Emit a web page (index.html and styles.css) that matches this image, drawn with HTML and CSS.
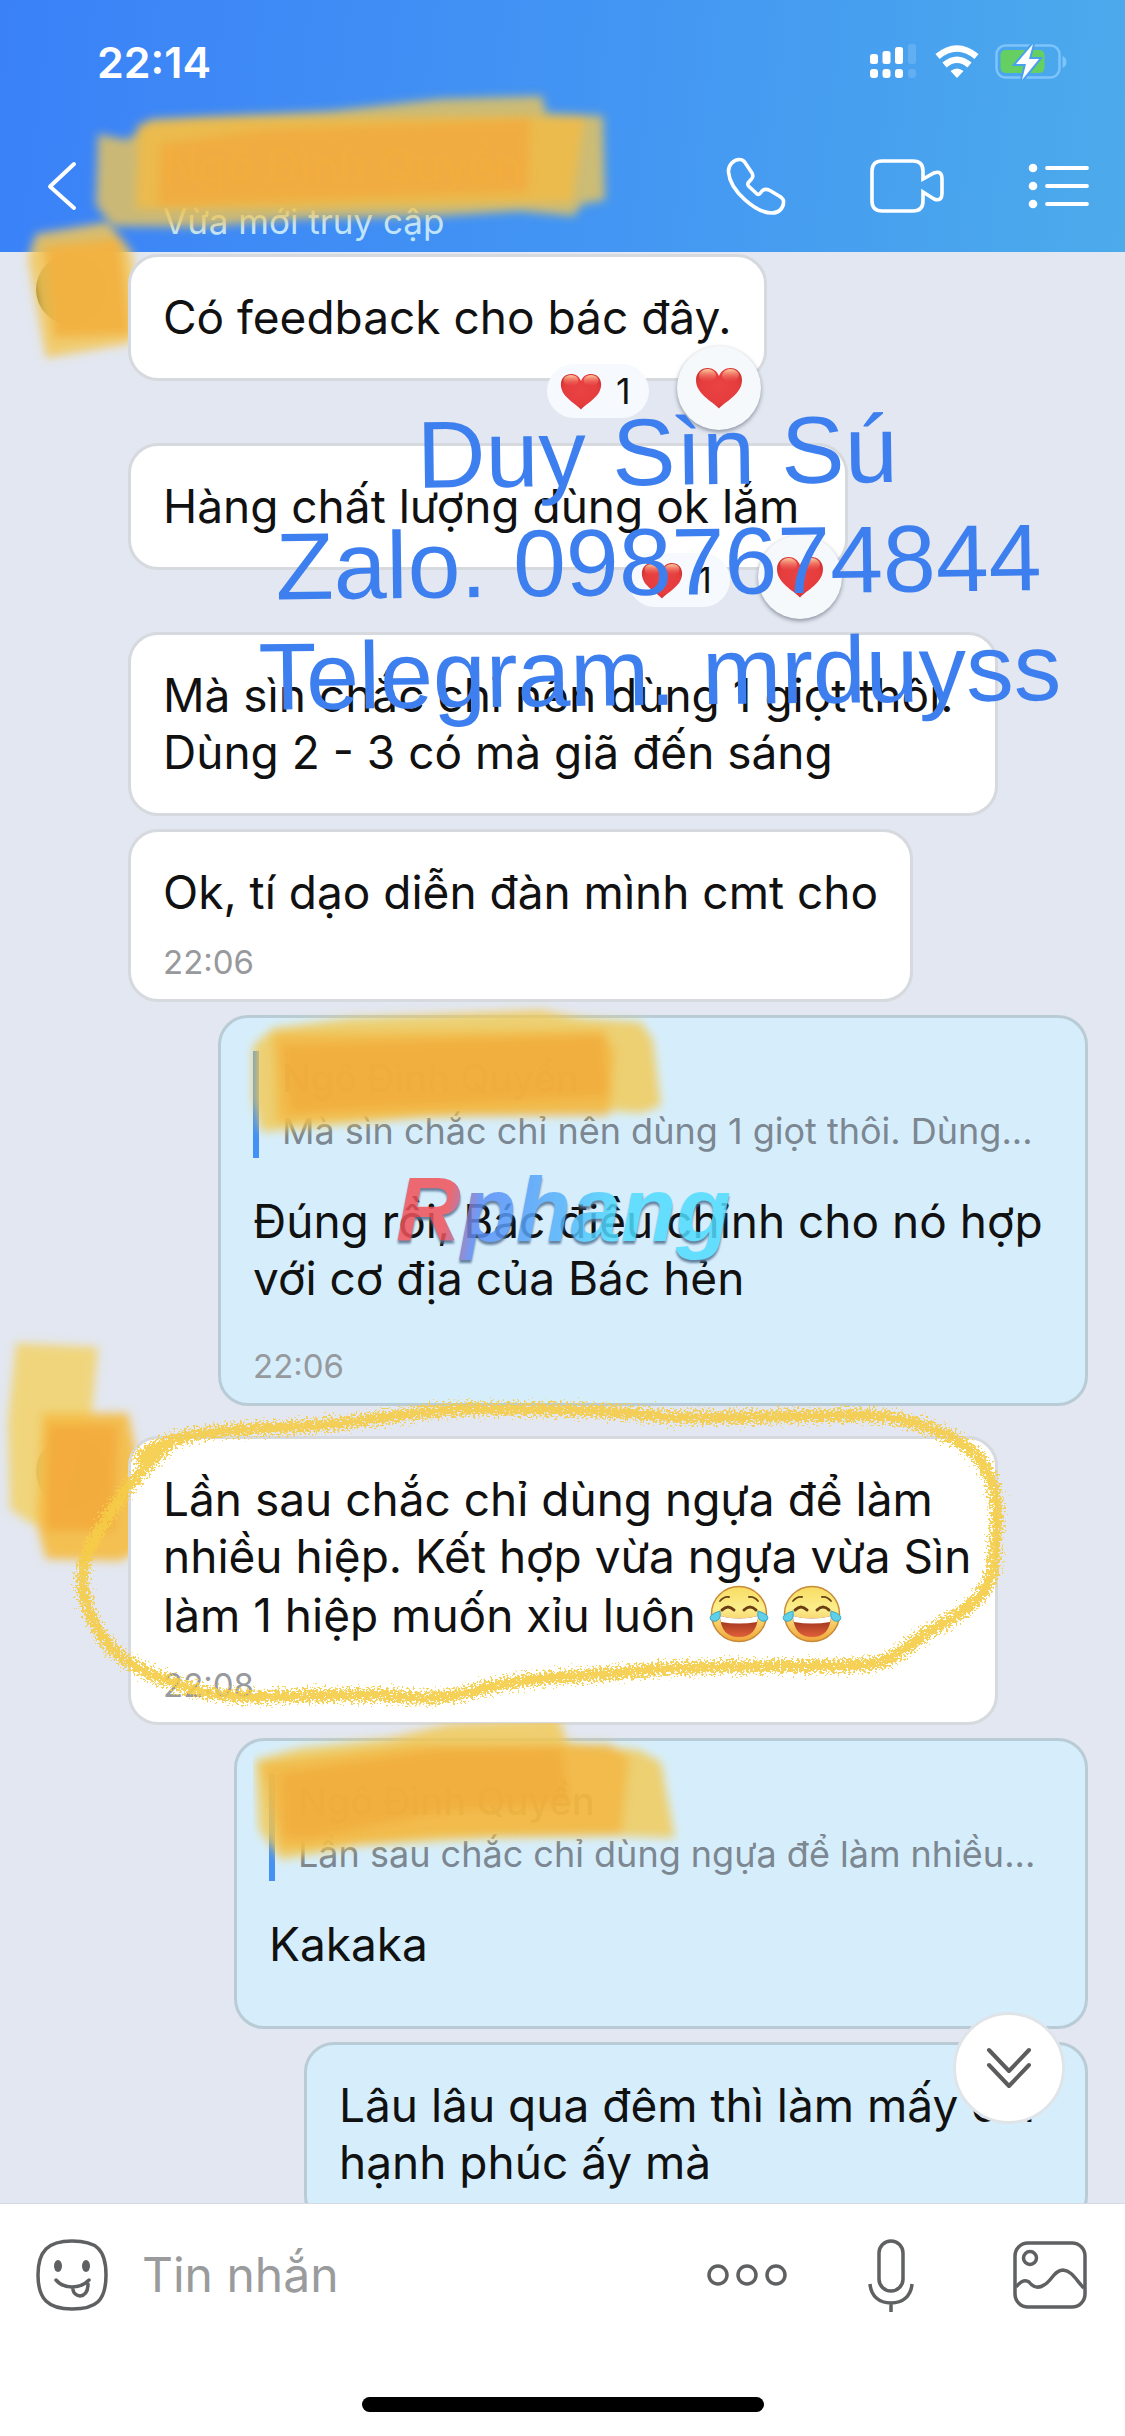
FILE: index.html
```html
<!DOCTYPE html>
<html lang="vi">
<head>
<meta charset="utf-8">
<meta name="viewport" content="width=device-width, initial-scale=1">
<title>Tin nhắn</title>
<link rel="stylesheet" href="styles.css">
</head>
<body>
<svg class="defs" width="0" height="0" aria-hidden="true">
  <defs>
    <filter id="soft" x="-10%" y="-20%" width="120%" height="140%"><feGaussianBlur stdDeviation="5"/></filter>
    <filter id="crayon" filterUnits="userSpaceOnUse" x="0" y="1380" width="1125" height="350">
      <feTurbulence type="fractalNoise" baseFrequency="0.45" numOctaves="2" seed="4" result="n"/>
      <feDisplacementMap in="SourceGraphic" in2="n" scale="22" xChannelSelector="R" yChannelSelector="G"/>
    </filter>
    <radialGradient id="heartFill" cx="0.5" cy="0.45" r="0.6"><stop offset="0" stop-color="#ea4343"/><stop offset="0.7" stop-color="#e53c3d"/><stop offset="1" stop-color="#c92f2f"/></radialGradient>
    <linearGradient id="shine" x1="0" y1="0" x2="0" y2="1"><stop offset="0" stop-color="#ffd9a8" stop-opacity=".95"/><stop offset="1" stop-color="#f0605a" stop-opacity="0"/></linearGradient>
    <linearGradient id="face" x1="0" y1="0" x2="0" y2="1"><stop offset="0" stop-color="#f8dc62"/><stop offset=".4" stop-color="#fbee8c"/><stop offset="1" stop-color="#f1a53a"/></linearGradient>
    <linearGradient id="mouth" x1="0" y1="0" x2="0" y2="1"><stop offset="0" stop-color="#8f2a16"/><stop offset="1" stop-color="#e0603a"/></linearGradient>
    <symbol id="heart" viewBox="0 0 48 42">
      <path d="M24 41.500C17 34 1 27 1 13C1 5.500 6.500 1 12.500 1C18 1 22 4 24 9C26 4 30 1 35.500 1C41.500 1 47 5.500 47 13C47 27 31 34 24 41.500Z" fill="url(#heartFill)"/>
      <ellipse cx="12.500" cy="8.500" rx="8.500" ry="6.500" fill="url(#shine)"/><ellipse cx="35.500" cy="8.500" rx="8.500" ry="6.500" fill="url(#shine)"/>
    </symbol>
    <symbol id="joy" viewBox="0 0 60 58">
      <circle cx="30" cy="29" r="27.500" fill="url(#face)" stroke="#c98a35" stroke-width="1.500"/>
      <path d="M11 16q4-5 9-4M40 12q5-1 9 4" fill="none" stroke="#6b4415" stroke-width="1.800" stroke-linecap="round"/>
      <path d="M13 25q6-6 12 0M35 25q6-6 12 0" fill="none" stroke="#6b3d12" stroke-width="3" stroke-linecap="round"/>
      <path d="M11 31q19 5 38 0q-1 21-19 21t-19-21Z" fill="url(#mouth)"/>
      <path d="M11 31q19 5 38 0q0 3-1 6q-18 3-36 0q-1-3-1-6Z" fill="#fff"/>
      <path d="M11 26q1 6-1 8q-4 4-8 1q-4-5 9-9ZM49 26q-1 6 1 8q4 4 8 1q4-5-9-9Z" fill="#5fd0e8" stroke="#3aa9c8" stroke-width="1"/>
    </symbol>
  </defs>
</svg>

<header class="top">
  <div class="status">
    <time class="clock">22:14</time>
    <svg class="signal" width="48" height="36" viewBox="0 0 48 36" fill="#fff"><rect x="1" y="10" width="8" height="10" rx="2.500"/><rect x="13.500" y="7" width="8" height="13" rx="2.500"/><rect x="26" y="3" width="8" height="17" rx="2.500"/><rect x="1" y="25" width="8" height="9" rx="3"/><rect x="13.500" y="25" width="8" height="9" rx="3"/><rect x="26" y="25" width="8" height="9" rx="3"/><g opacity=".14"><rect x="39" y="0" width="8" height="20" rx="2.500"/><rect x="39" y="25" width="8" height="9" rx="3"/></g></svg>
    <svg class="wifi" width="44" height="34" viewBox="0 0 44 34"><g fill="none" stroke="#fff" stroke-width="6.500"><path d="M2.500 11.500Q22-4.500 41.500 11.500"/><path d="M9.500 20Q22 9.500 34.500 20"/></g><path d="M15.500 26Q22 21 28.500 26L22 33Z" fill="#fff"/></svg>
    <svg class="battery" width="72" height="36" viewBox="0 0 72 36"><rect x="1.500" y="1.500" width="63" height="32" rx="9" fill="none" stroke="#7cc4fb" stroke-width="2.500"/><rect x="5.500" y="6" width="44" height="23" rx="5" fill="#66cf62"/><path d="M67.500 12q4 1.500 4 6t-4 6Z" fill="#7cc4fb"/><path d="M38 0L21 20H31L27 36L44 15H34Z" fill="#fff" stroke="#48a0ef" stroke-width="4" paint-order="stroke"/></svg>
  </div>
  <nav class="nav">
    <button class="icon back" aria-label="Quay lại"><svg width="32" height="50" viewBox="0 0 32 50"><path d="M28 3L4 25.500L28 47" fill="none" stroke="#fff" stroke-width="4" stroke-linecap="round" stroke-linejoin="round"/></svg></button>
    <div class="who">
      <h1>Ngô Đình Quyền</h1>
      <p>Vừa mới truy cập</p>
      <svg class="smear smear-title" width="560" height="170" viewBox="80 80 560 170" aria-hidden="true"><g filter="url(#soft)">
        <path d="M98 134L128 140L150 119L330 111L440 99L542 96L546 113L603 116L605 200L582 204L574 216L520 211L440 216L300 219L200 227L112 226L96 205Z" fill="#f2c653" opacity=".78"/>
        <path d="M138 124L200 118L585 117L572 202L300 208L136 209Z" fill="#f2bb44" opacity=".8"/></g>
        <path d="M160 144L262 130L530 119L528 192L270 201L158 205Z" fill="#f2a93c" opacity=".8" filter="url(#soft)"/></svg>
    </div>
    <button class="icon call" aria-label="Gọi thoại"><svg width="60" height="58" viewBox="0 0 60 58"><path d="M14 2.500C8 2 2 8 2.500 15C4 34 30 56 46 56C53 56 58 51 57.500 44C57.500 42 56 41 54 39.500L44 33.500C41 32 38 32 36 34L34 36.500C33 37.500 32 37.500 31 37L22.500 29C21.500 27.500 21.500 27 22 26L25.500 22C27.500 20 27 18 26 16L19 5.500C17.500 3.500 16 2.500 14 2.500Z" fill="none" stroke="#fff" stroke-width="3.600" stroke-linejoin="round"/></svg></button>
    <button class="icon video" aria-label="Gọi video"><svg width="74" height="54" viewBox="0 0 74 54"><path d="M12 2H43Q53 2 53 12V20L64 14Q72 11 72 20V34Q72 43 64 40L53 33V42Q53 52 43 52H12Q2 52 2 42V12Q2 2 12 2Z" fill="none" stroke="#fff" stroke-width="3.600"/></svg></button>
    <button class="icon menu" aria-label="Tùy chọn"><svg width="62" height="46" viewBox="0 0 62 46"><g fill="#fff"><circle cx="5" cy="5" r="4.300"/><circle cx="5" cy="23" r="4.300"/><circle cx="5" cy="41" r="4.300"/></g><path d="M19 5H59M19 23H59M19 41H59" stroke="#fff" stroke-width="3.800" stroke-linecap="round"/></svg></button>
  </nav>
</header>

<main class="chat">
  <article class="row reacted">
    <span class="avatar"></span>
    <svg class="smear smear-avatar-a" width="160" height="180" viewBox="10 200 160 180" aria-hidden="true"><g filter="url(#soft)"><path d="M36 234L108 222L132 252L142 328L128 344L46 358L28 258Z" fill="#f3c757" opacity=".85"/><path d="M44 246L120 238L130 334L54 338Z" fill="#f2b341" opacity=".97"/></g></svg>
    <div class="bubble"><p>Có feedback cho bác đây.</p>
      <div class="reacts"><span class="count"><svg width="42" height="37"><use href="#heart"/></svg>1</span><button class="react" aria-label="Thả tim"><svg width="48" height="42"><use href="#heart"/></svg></button></div></div>
  </article>
  <article class="row reacted">
    <div class="bubble medium"><p>Hàng chất lượng dùng ok lắm</p>
      <div class="reacts"><span class="count"><svg width="42" height="37"><use href="#heart"/></svg>1</span><button class="react" aria-label="Thả tim"><svg width="48" height="42"><use href="#heart"/></svg></button></div></div>
  </article>
  <article class="row"><div class="bubble full"><p>Mà sìn chắc chỉ nên dùng 1 giọt thôi.<br>Dùng 2 - 3 có mà giã đến sáng</p></div></article>
  <article class="row"><div class="bubble timed"><p>Ok, tí dạo diễn đàn mình cmt cho</p><time>22:06</time></div></article>
  <article class="row mine last-of-group">
    <div class="bubble timed full">
      <blockquote><strong>Ngô Đình Quyền</strong><span>Mà sìn chắc chỉ nên dùng 1 giọt thôi. Dùng...</span>
        <svg class="smear smear-quote" width="460" height="150" viewBox="236 1000 460 150" aria-hidden="true"><g filter="url(#soft)"><path d="M252 1046L272 1028L350 1018L540 1010L580 1018L640 1022L652 1040L660 1106L640 1113L600 1110L420 1118L260 1132L252 1100Z" fill="#f2c850" opacity=".8"/><path d="M272 1034L602 1030L614 1052L608 1116L420 1116L276 1122Z" fill="#f2b642" opacity=".8"/><path d="M280 1046L602 1036L608 1096L290 1112Z" fill="#f2a93c" opacity=".65"/></g></svg>
      </blockquote>
      <p>Đúng rồi, Bác điều chỉnh cho nó hợp<br>với cơ địa của Bác hẻn</p><time>22:06</time>
    </div>
  </article>
  <article class="row">
    <span class="avatar"></span>
    <svg class="smear smear-avatar-b" width="170" height="280" viewBox="-10 1320 170 280" aria-hidden="true"><g filter="url(#soft)"><path d="M16 1342L98 1346L92 1410L60 1525L30 1522L10 1508L8 1420Z" fill="#f2d267" opacity=".85"/><path d="M42 1412L128 1412L136 1450L142 1548L120 1560L46 1558L36 1520Z" fill="#f4be49" opacity=".95"/><path d="M48 1424L118 1424L114 1530L46 1530Z" fill="#f2a93c" opacity=".85"/></g></svg>
    <div class="bubble timed full"><p>Lần sau chắc chỉ dùng ngựa để làm<br>nhiều hiệp. Kết hợp vừa ngựa vừa Sìn<br>làm 1 hiệp muốn xỉu luôn <svg class="emoji" width="60" height="58" role="img" aria-label="cười ra nước mắt"><use href="#joy"/></svg> <svg class="emoji" width="60" height="58" role="img" aria-label="cười ra nước mắt"><use href="#joy"/></svg></p><time>22:08</time></div>
    <svg class="smear loop" width="1125" height="340" viewBox="0 1385 1125 340" aria-hidden="true"><path d="M140 1456C170 1432 210 1430 290 1426C360 1424 420 1408 470 1408C540 1408 600 1408 670 1416C740 1418 800 1414 870 1414C920 1418 960 1436 980 1458C1004 1490 996 1530 994 1560C990 1600 960 1612 930 1630C900 1650 890 1664 860 1664C790 1666 720 1664 660 1668C600 1676 530 1674 480 1688C430 1704 400 1692 350 1694C280 1694 240 1700 200 1690C150 1676 118 1662 100 1632C80 1600 78 1570 90 1546C110 1510 130 1480 152 1460L172 1440" fill="none" stroke="#f6cd46" stroke-width="12" stroke-linecap="round" opacity=".9" filter="url(#crayon)"/></svg>
  </article>
  <article class="row mine">
    <div class="bubble quoted large">
      <blockquote><strong>Ngô Đình Quyền</strong><span>Lần sau chắc chỉ dùng ngựa để làm nhiều...</span>
        <svg class="smear smear-quote" width="460" height="170" viewBox="254 1723 460 170" aria-hidden="true"><g filter="url(#soft)"><path d="M256 1760L300 1748L390 1738L450 1724L560 1718L568 1742L640 1750L662 1762L676 1838L620 1836L500 1838L360 1846L282 1860L260 1830Z" fill="#f2c850" opacity=".8"/><path d="M262 1764L420 1744L610 1744L630 1758L622 1834L440 1836L282 1850Z" fill="#f2b642" opacity=".8"/><path d="M282 1774L440 1750L562 1748L570 1804L450 1810L310 1838L284 1836Z" fill="#f2a93c" opacity=".65"/></g></svg>
      </blockquote>
      <p>Kakaka</p>
    </div>
  </article>
  <article class="row mine"><div class="bubble regular"><p>Lâu lâu qua đêm thì làm mấy cái<br>hạnh phúc ấy mà</p></div></article>

  <div class="contact">Duy Sìn Sú<br>Zalo. 0987674844<br>Telegram. mrduyss</div>
  <div class="brand">Rphang</div>
  <button class="jump" aria-label="Xuống cuối"><svg width="46" height="42" viewBox="0 0 46 42"><path d="M3 3L23 24L43 3M3 18L23 39L43 18" fill="none" stroke="#5c5c5e" stroke-width="4" stroke-linecap="round" stroke-linejoin="round"/></svg></button>
</main>

<footer class="bottom">
  <form class="composer">
    <button type="button" class="icon" aria-label="Nhãn dán"><svg width="72" height="72" viewBox="0 0 72 72" fill="none" stroke="#5f6062" stroke-width="3.500"><path d="M36 2C60 2 70 10 70 36S60 70 36 70S2 60 2 36S12 2 36 2Z"/><path d="M20 41Q26 48 36 48T53 41M37 48V51Q38 56 44 57Q52 56 52 45" stroke-linecap="round"/><g fill="#5f6062" stroke="none"><ellipse cx="22" cy="27" rx="4" ry="6"/><ellipse cx="50" cy="27" rx="4" ry="6"/></g></svg></button>
    <input type="text" aria-label="Tin nhắn" placeholder="Tin nhắn">
    <button type="button" class="icon more" aria-label="Thêm"><svg width="80" height="24" viewBox="0 0 80 24" fill="none" stroke="#5f6062" stroke-width="3.500"><circle cx="11" cy="12" r="9"/><circle cx="40" cy="12" r="9"/><circle cx="69" cy="12" r="9"/></svg></button>
    <button type="button" class="icon mic" aria-label="Ghi âm"><svg width="48" height="74" viewBox="0 0 48 74" fill="none" stroke="#5f6062" stroke-width="3.500"><rect x="12" y="3" width="24" height="50" rx="12"/><path d="M3 46C4 58 12 65 24 65S44 58 45 46M24 65V74"/></svg></button>
    <button type="button" class="icon" aria-label="Ảnh"><svg width="74" height="68" viewBox="0 0 74 68" fill="none" stroke="#5f6062" stroke-width="3.500"><rect x="2" y="2" width="70" height="64" rx="13"/><circle cx="17" cy="17" r="6.500"/><path d="M3 46C8 40 12 38 16 41C20 46 25 48 31 44C39 40 41 29 50 29C60 30 64 41 71 47"/></svg></button>
  </form>
  <div class="home"></div>
</footer>
</body>
</html>
```
FILE: styles.css
```css
* { box-sizing: border-box; }
body {
  margin: 0;
  height: 100vh;
  display: flex;
  flex-direction: column;
  overflow: hidden;
  background: #e2e7f1;
  color: #111;
  font-family: Inter, "Liberation Sans", sans-serif;
}
h1, p, blockquote, form { margin: 0; }
button { padding: 0; border: 0; background: none; font: inherit; color: inherit; }
svg { display: block; flex: none; }
.defs { position: absolute; }
.smear { position: absolute; pointer-events: none; }

/* header */
.top { flex: none; background: linear-gradient(97deg, #3a81f8, #4396f3 55%, #4cabeb); color: #fff; }
.status { display: flex; align-items: center; height: 124px; padding: 0 58px 0 97px; }
.clock { flex: 1; font-size: 43px; font-weight: 600; }
.wifi { margin-left: 18px; }
.battery { margin-left: 16px; }
.nav { display: flex; align-items: center; height: 128px; padding: 0 35px 4px 46px; }
.back { width: 117px; }
.who { position: relative; flex: 1; align-self: flex-start; padding-top: 13px; }
.who h1 { font-size: 46px; line-height: 56px; font-weight: 500; white-space: nowrap; color: #ffe9a0; }
.who p { margin-top: 6px; font-size: 35px; line-height: 44px; color: #c1e4fd; }
.smear-title { left: -83px; top: -44px; }
.call, .video { margin-right: 84px; }

/* conversation */
.chat { position: relative; flex: 1; min-height: 0; padding-top: 2px; }
.row { position: relative; display: flex; padding: 0 37px 0 128px; margin-bottom: 13px; }
.row.reacted { margin-bottom: 62px; }
.row.mine { justify-content: flex-end; }
.row.last-of-group { margin-bottom: 30px; }
.avatar { position: absolute; left: 36px; top: 0; width: 71px; height: 71px; border-radius: 50%; background: #6c611f; }
.bubble {
  position: relative;
  padding: 32px;
  border: 3px solid #d6d9dd;
  border-radius: 30px;
  background: #fff;
  font-size: 46px;
  line-height: 57px;
  white-space: nowrap;
}
.bubble.medium { width: 720px; }
.bubble.regular { width: 784px; }
.bubble.large { width: 854px; }
.bubble.full { width: 870px; }
.mine .bubble { background: #d6eefc; border-color: #b9ccd6; }
.bubble.timed { padding-bottom: 17px; }
.bubble.quoted { padding-bottom: 53px; }
.bubble time { display: block; margin-top: 21px; font-size: 33px; line-height: 40px; color: #97999c; }
.mine .timed time { margin-top: 39px; }
.emoji { display: inline-block; vertical-align: -11px; }
blockquote {
  position: relative;
  margin: 1px 0 35px;
  padding-left: 23px;
  border-left: 6px solid #4391f5;
  font-size: 36px;
  line-height: 53px;
  color: #7c8791;
}
blockquote strong { display: block; font-size: 38px; line-height: 54px; font-weight: 500; color: #222; }
blockquote span { display: block; }
.smear-quote { left: -22px; top: -51px; }
.smear-avatar-a { left: 10px; top: -54px; }
.smear-avatar-b { left: -10px; top: -115px; }
.loop { left: 0; top: -50px; }

.reacts { position: absolute; right: 3px; bottom: -52px; display: flex; align-items: center; gap: 28px; }
.count { display: flex; align-items: center; gap: 14px; height: 54px; margin-top: 6px; padding: 0 18px 0 13px; border-radius: 27px; background: #f6f9fd; font-size: 36px; }
.react { display: grid; place-items: center; width: 84px; height: 84px; border-radius: 50%; background: #f6f9fc; box-shadow: 0 2px 4px #8c93a0; }

/* stamps laid over the conversation */
.contact { position: absolute; left: 0; right: 0; top: 146px; padding-left: 192px; font: 95px/110px "Liberation Sans", Arial, sans-serif; text-align: center; white-space: nowrap; color: #3e7ff0; transform: rotate(-0.7deg); }
.brand { position: absolute; left: 396px; top: 908px; font: italic 700 90px/100px "Liberation Sans", Arial, sans-serif; color: transparent; background: linear-gradient(100deg, #f0525a 17%, #5b8ef8 26%, #55b4fb 50%, #50dcff 65%); background-clip: text; -webkit-background-clip: text; opacity: .85; filter: drop-shadow(0 3px 1px #53708f); }
.jump { position: absolute; right: 60px; bottom: 79px; display: grid; place-items: center; width: 112px; height: 112px; border: 3px solid #dfe4e8; border-radius: 50%; background: #fff; }

/* composer */
.bottom { position: relative; z-index: 1; flex: none; padding-bottom: 24px; border-top: 1px solid #d5dae2; background: #fff; }
.composer { display: flex; align-items: center; height: 142px; padding: 0 38px 0 36px; }
.composer input { flex: 1; min-width: 0; padding: 0 0 0 34px; border: 0; background: none; font: 48px/58px Inter, sans-serif; }
.composer input::placeholder { color: #999b9d; opacity: 1; }
.more { margin-right: 80px; }
.mic { margin-right: 98px; }
.home { width: 402px; height: 15px; margin: 51px auto 0; border-radius: 8px; background: #000; }
```
